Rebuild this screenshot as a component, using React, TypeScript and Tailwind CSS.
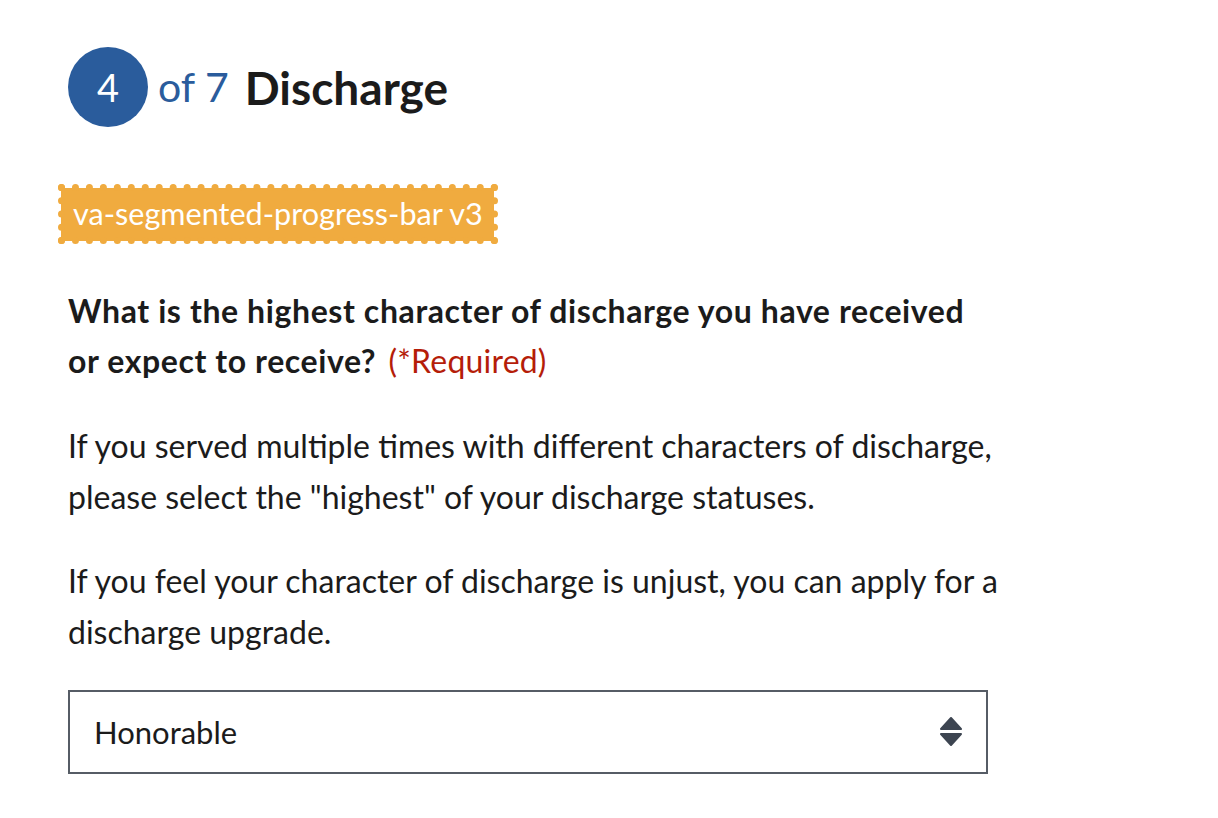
const FONT = { fontFamily: "Lato, 'Open Sans', sans-serif" };

export default function App() {
  return (
    <div className="min-h-screen w-full bg-white text-[#1b1b1b]" style={FONT}>
      <div className="pl-[68px] pt-[47px] w-[1010px]">
        {/* STEP HEADER */}
        <div className="flex items-center">
          <div className="flex h-[80px] w-[80px] items-center justify-center rounded-full bg-[#2a5c9c] text-[38px] text-white">
            4
          </div>
          <span className="ml-[10px] text-[41px] text-[#2a5c9c]">of 7</span>
          <span className="ml-[16px] text-[46px] font-bold">Discharge</span>
        </div>

        {/* LABEL (dotted edge, fill reaches the middle of the dots) */}
        <div className="mt-[57px] -ml-[10px] inline-block border-[7px] border-dotted border-[#f0ab3f] [background:linear-gradient(#f0ab3f,#f0ab3f)_center/calc(100%-7px)_calc(100%-7px)_no-repeat_border-box] px-[8px] py-[3px] text-[30.6px] leading-[40px] text-white">
          va-segmented-progress-bar v3
        </div>

        {/* QUESTION */}
        <p className="mt-[42px] w-[920px] text-[32px] leading-[50px] tracking-[0.6px] font-bold">
          What is the highest character of discharge you have received or expect to
          receive?{" "}
          <span className="ml-[4px] font-normal tracking-[0.2px] text-[#b51d09]">(*Required)</span>
        </p>

        <p className="mt-[34px] w-[940px] text-[32px] leading-[51px]">
          If you served multiple times with different characters of discharge,
          please select the "highest" of your discharge statuses.
        </p>

        <p className="mt-[33px] w-[940px] text-[32px] leading-[51px]">
          If you feel your character of discharge is unjust, you can apply for a
          discharge upgrade.
        </p>

        {/* SELECT */}
        <div className="mt-[33px] flex h-[84px] w-[920px] items-center justify-between border-2 border-[#565c65] pl-[24px] pr-[24px] text-[31px]">
          <span>Honorable</span>
          <svg width="22" height="30" viewBox="0 0 22 30" className="text-[#3d4551]">
            <path d="M11 1 L21 12 L1 12 Z" fill="currentColor" strokeLinejoin="round" stroke="currentColor" strokeWidth="2" />
            <path d="M1 17 L21 17 L11 28 Z" fill="currentColor" strokeLinejoin="round" stroke="currentColor" strokeWidth="2" />
          </svg>
        </div>
      </div>
    </div>
  );
}
